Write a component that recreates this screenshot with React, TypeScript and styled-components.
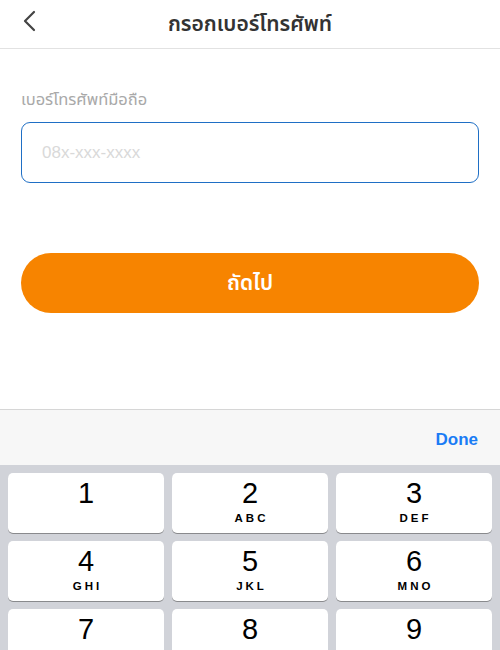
import { createGlobalStyle, styled } from 'styled-components';

const GlobalStyle = createGlobalStyle`
  html, body {
    margin: 0;
    padding: 0;
    background: #ffffff;
  }
  body {
    font-family: "Noto Sans", "Noto Sans Thai", "Liberation Sans", sans-serif;
  }
`;

const KEYS = [
  { digit: '1', letters: '' },
  { digit: '2', letters: 'ABC' },
  { digit: '3', letters: 'DEF' },
  { digit: '4', letters: 'GHI' },
  { digit: '5', letters: 'JKL' },
  { digit: '6', letters: 'MNO' },
  { digit: '7', letters: 'PQRS' },
  { digit: '8', letters: 'TUV' },
  { digit: '9', letters: 'WXYZ' },
];

function BackIcon() {
  return (
    <svg width="14" height="22" viewBox="0 0 14 22" fill="none">
      <path
        d="M12 2 L3 11 L12 20"
        stroke="#444"
        strokeWidth="2.2"
        strokeLinecap="round"
        strokeLinejoin="round"
      />
    </svg>
  );
}

function App() {
  return (
    <Styled.Page>
      <GlobalStyle />
      <Styled.Header>
        <Styled.BackButton aria-label="back">
          <BackIcon />
        </Styled.BackButton>
        <Styled.Title>กรอกเบอร์โทรศัพท์</Styled.Title>
      </Styled.Header>

      <Styled.Content>
        <Styled.Label>เบอร์โทรศัพท์มือถือ</Styled.Label>
        <Styled.Input placeholder="08x-xxx-xxxx" inputMode="numeric" />
        <Styled.NextButton>ถัดไป</Styled.NextButton>
      </Styled.Content>

      <Styled.Toolbar>
        <Styled.Done>Done</Styled.Done>
      </Styled.Toolbar>

      <Styled.Keypad>
        {KEYS.map(function (key) {
          return (
            <Styled.Key key={key.digit}>
              <Styled.Digit>{key.digit}</Styled.Digit>
              <Styled.Letters>{key.letters}</Styled.Letters>
            </Styled.Key>
          );
        })}
      </Styled.Keypad>
    </Styled.Page>
  );
}

export default App;

const Styled = {
  Page: styled.div`
    width: 500px;
    height: 650px;
    overflow: hidden;
    display: flex;
    flex-direction: column;
    background: #ffffff;
  `,

  Header: styled.header`
    position: relative;
    height: 48px;
    display: flex;
    align-items: center;
    justify-content: center;
    border-bottom: 1px solid #e2e2e2;
    flex-shrink: 0;
  `,

  BackButton: styled.button`
    position: absolute;
    left: 22px;
    top: 10px;
    padding: 0;
    border: none;
    background: none;
    display: flex;
  `,

  Title: styled.h1`
    margin: 0;
    font-size: 21px;
    font-weight: 600;
    color: #333333;
  `,

  Content: styled.main`
    flex: 1;
    display: flex;
    flex-direction: column;
    padding: 38px 21px 0;
  `,

  Label: styled.label`
    font-size: 16.5px;
    line-height: 24px;
    color: #a9a9a9;
    margin-bottom: 11px;
  `,

  Input: styled.input`
    box-sizing: border-box;
    height: 61px;
    width: 100%;
    border: 1.5px solid #1f6fc5;
    border-radius: 9px;
    padding: 0 20px;
    font-family: "Liberation Sans", sans-serif;
    font-size: 17px;
    color: #333;
    outline: none;

    &::placeholder {
      color: #d9d9d9;
    }
  `,

  NextButton: styled.button`
    margin-top: 70px;
    height: 60px;
    border: none;
    border-radius: 30px;
    background: #f78400;
    color: #ffffff;
    font-family: "Noto Sans", "Noto Sans Thai", sans-serif;
    font-size: 21px;
    font-weight: 600;
  `,

  Toolbar: styled.div`
    height: 55px;
    flex-shrink: 0;
    display: flex;
    align-items: center;
    justify-content: flex-end;
    padding: 0 22px;
    background: #f7f7f7;
    border-top: 1px solid #d6d6d6;
  `,

  Done: styled.span`
    font-family: "Liberation Sans", sans-serif;
    font-size: 17px;
    font-weight: 700;
    color: #1a7cf5;
    padding-top: 4px;
  `,

  Keypad: styled.div`
    flex-shrink: 0;
    box-sizing: border-box;
    height: 185px;
    overflow: hidden;
    display: grid;
    grid-template-columns: repeat(3, 1fr);
    grid-auto-rows: 60px;
    gap: 8px;
    padding: 8px 8px 0;
    background: #d1d3d9;
  `,

  Key: styled.div`
    background: #ffffff;
    border-radius: 5px;
    box-shadow: 0 1px 0 #898a8d;
    display: flex;
    flex-direction: column;
    align-items: center;
    padding-top: 4px;
    box-sizing: border-box;
  `,

  Digit: styled.span`
    font-family: "Liberation Sans", sans-serif;
    font-size: 29px;
    line-height: 32px;
    color: #000000;
  `,

  Letters: styled.span`
    font-family: "Liberation Sans", sans-serif;
    font-size: 11.5px;
    font-weight: 700;
    letter-spacing: 3px;
    margin-right: -3px;
    margin-top: 2px;
    line-height: 14px;
    color: #000000;
  `,
};
